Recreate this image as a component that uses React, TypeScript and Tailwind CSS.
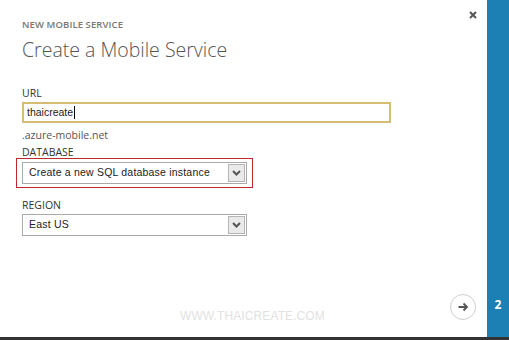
import React from "react";

function Chevron() {
  return (
    <svg width="9" height="6" viewBox="0 0 9 6">
      <path d="M1 1 L4.5 4.5 L8 1" stroke="#555" strokeWidth="2" fill="none" />
    </svg>
  );
}

function Select({ value }: { value: string }) {
  return (
    <div className="flex h-[22px] w-[225px] items-center justify-between border border-[#aaa] bg-white pl-[6px] pr-[1px]">
      <span className="whitespace-nowrap text-[10.5px] tracking-[0.2px] text-[#222]" style={{ fontFamily: "'Liberation Sans', sans-serif" }}>{value}</span>
      <div className="flex h-[18px] w-[17px] items-center justify-center border border-[#b5b5b5] bg-[#eaeaea]">
        <Chevron />
      </div>
    </div>
  );
}

export default function App() {
  return (
    <div className="flex h-[340px] w-[509px] flex-col bg-white" style={{ fontFamily: "'Open Sans', 'Noto Sans', sans-serif" }}>
      <div className="flex flex-1">
        <div className="relative flex flex-1 flex-col pl-[22px] pt-[18px]">
          <svg className="absolute right-[10px] top-[11px]" width="8" height="8" viewBox="0 0 8 8">
            <path d="M1 1 L7 7 M7 1 L1 7" stroke="#555" strokeWidth="2" />
          </svg>
          <div className="text-[9.5px] font-semibold uppercase leading-[14px] tracking-[0.1px] text-[#777]">New Mobile Service</div>
          <div className="mt-[5px] text-[19.5px] font-light leading-[26px] text-[#555]">Create a Mobile Service</div>
          <div className="mt-[23px] text-[10.5px] leading-[14px] text-[#333]">URL</div>
          <div className="mt-[2px] flex h-[21px] w-[369px] items-center border-2 border-[#d6bd72] pl-[3px]">
            <span className="text-[10.5px] text-[#222]" style={{ fontFamily: "'Liberation Sans', sans-serif" }}>thaicreate</span>
            <span className="ml-[1px] h-[13px] w-[1px] bg-black" />
          </div>
          <div className="mt-[5px] text-[10.5px] leading-[14px] text-[#555]">.azure-mobile.net</div>
          <div className="mt-[3px] text-[10.5px] leading-[14px] text-[#333]">DATABASE</div>
          <div className="-ml-[6px] -mt-[1px] w-[237px] border border-[#c1272d] px-[5px] py-[3px]">
            <Select value="Create a new SQL database instance" />
          </div>
          <div className="mt-[10px] text-[10.5px] leading-[14px] text-[#333]">REGION</div>
          <div className="mt-[2px]">
            <Select value="East US" />
          </div>
          <div className="flex flex-1 items-end justify-end pb-[17px] pr-[11px]">
            <div className="flex h-[26px] w-[26px] items-center justify-center rounded-full border-[1.5px] border-[#cfcfcf]">
              <svg width="11" height="10" viewBox="0 0 11 10">
                <path d="M0.5 5 H9 M5.5 1.5 L9 5 L5.5 8.5" stroke="#555" strokeWidth="1.8" fill="none" />
              </svg>
            </div>
          </div>
          <div className="absolute left-[180px] top-[307px] text-[12px] tracking-[0.1px] text-[#e2e2e2]" style={{ fontFamily: "'Liberation Sans', sans-serif" }}>
            WWW.THAICREATE.COM
          </div>
        </div>
        <div className="flex w-[22px] flex-col items-center justify-end bg-[#1c80b5] pb-[23px]">
          <span className="text-[12px] font-bold text-white">2</span>
        </div>
      </div>
      <div className="h-[3px] bg-[#333]" />
    </div>
  );
}
